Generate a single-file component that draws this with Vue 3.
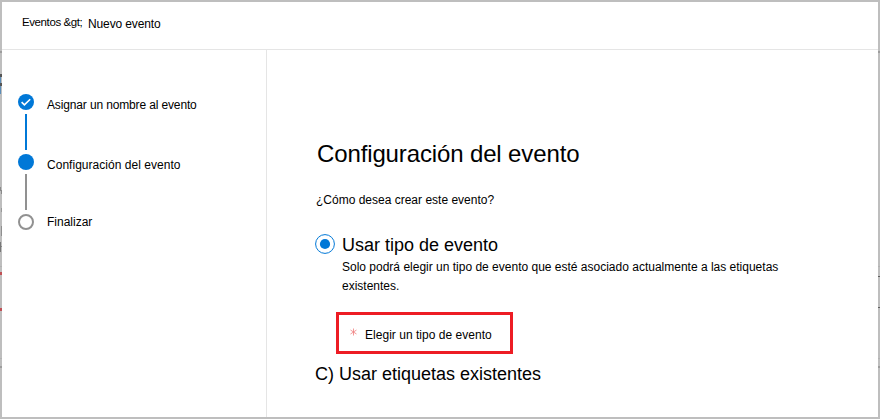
<script setup>
const steps = [
  { label: 'Asignar un nombre al evento', state: 'done' },
  { label: 'Configuración del evento', state: 'current' },
  { label: 'Finalizar', state: 'pending' },
]

// Slivers of the dimmed page that show around the panel
const slivers = [
  { x: 0, y: 51, w: 2, h: 2, c: '#9d9d9d' },
  { x: 0, y: 77, w: 1, h: 17, c: '#5b8db8' },
  { x: 0, y: 74, w: 2, h: 3, c: '#555555' },
  { x: 0, y: 83, w: 2, h: 3, c: '#555555' },
  { x: 0, y: 187, w: 1, h: 4, c: '#8a8a8a' },
  { x: 1, y: 190, w: 1, h: 4, c: '#8a8a8a' },
  { x: 1, y: 208, w: 1, h: 4, c: '#999999' },
  { x: 1, y: 226, w: 1, h: 10, c: '#8f8f8f' },
  { x: 0, y: 242, w: 1, h: 10, c: '#777777' },
  { x: 1, y: 246, w: 1, h: 1, c: '#888888' },
  { x: 0, y: 266, w: 2, h: 1, c: '#b2b2b2' },
  { x: 0, y: 272, w: 2, h: 3, c: '#c05055' },
  { x: 0, y: 308, w: 2, h: 3, c: '#c05055' },
  { x: 0, y: 358, w: 2, h: 1, c: '#b2b2b2' },
  { x: 0, y: 366, w: 2, h: 2, c: '#9d9d9d' },
  { x: 878, y: 51, w: 2, h: 2, c: '#9d9d9d' },
  { x: 878, y: 266, w: 2, h: 1, c: '#b2b2b2' },
  { x: 878, y: 276, w: 2, h: 1, c: '#606060' },
  { x: 878, y: 307, w: 2, h: 1, c: '#606060' },
  { x: 878, y: 358, w: 2, h: 1, c: '#b2b2b2' },
  { x: 878, y: 366, w: 2, h: 2, c: '#9d9d9d' },
]
</script>

<template>
  <div class="backdrop">
    <i
      v-for="(s, i) in slivers"
      :key="i"
      class="sliver"
      :style="{ left: s.x + 'px', top: s.y + 'px', width: s.w + 'px', height: s.h + 'px', background: s.c }"
    ></i>
    <div class="panel">
      <header class="crumbs">
        <span class="crumb-root">Eventos &amp;gt;</span>
        <span class="crumb-leaf">Nuevo evento</span>
      </header>
      <div class="body">
        <nav class="steps">
          <div v-for="s in steps" :key="s.label" class="step" :class="s.state">
            <div class="rail">
              <svg class="dot" viewBox="0 0 16 16">
                <circle v-if="s.state === 'pending'" cx="8" cy="8" r="7" fill="#fff" stroke="#919191" stroke-width="2" />
                <circle v-else cx="8" cy="8" r="8" fill="#0078d7" />
                <path v-if="s.state === 'done'" d="M3.6 8.2 L6.4 10.9 L12.2 5.2" fill="none" stroke="#fff" stroke-width="1.6" />
              </svg>
              <div v-if="s.state !== 'pending'" class="line"></div>
            </div>
            <span class="label">{{ s.label }}</span>
          </div>
        </nav>
        <main class="content">
          <h1 class="title">Configuración del evento</h1>
          <p class="question">¿Cómo desea crear este evento?</p>
          <div class="option">
            <svg class="radio" viewBox="0 0 20 20">
              <circle cx="10" cy="10" r="9.4" fill="#fff" stroke="#0078d7" stroke-width="1" />
              <circle cx="10" cy="10" r="5.1" fill="#0078d7" />
            </svg>
            <div>
              <div class="option-title">Usar tipo de evento</div>
              <p class="hint">Solo podrá elegir un tipo de evento que esté asociado actualmente a las etiquetas<br />existentes.</p>
            </div>
          </div>
          <div class="choose">
            <svg class="required" viewBox="0 0 7 8">
              <path d="M3.5 0.5 V7.5 M0.5 2 L6.5 6 M6.5 2 L0.5 6" fill="none" stroke="#f08080" stroke-width="0.8" />
            </svg>
            <span class="choose-text">Elegir un tipo de evento</span>
          </div>
          <div class="existing">C) Usar etiquetas existentes</div>
        </main>
      </div>
    </div>
  </div>
</template>

<style>
body {
  margin: 0;
}
</style>

<style scoped>
.backdrop {
  position: relative;
  box-sizing: border-box;
  width: 880px;
  height: 419px;
  padding: 2px;
  background: #bebebe;
  color: #000;
  font-family: "Liberation Sans", Arial, sans-serif;
  font-size: 12px;
  line-height: 16px;
  white-space: nowrap;
}
.sliver {
  position: absolute;
}
.panel {
  display: flex;
  flex-direction: column;
  width: 876px;
  height: 415px;
  background: #fff;
}
.crumbs {
  display: flex;
  box-sizing: border-box;
  height: 48px;
  padding: 12px 0 0 20px;
  border-bottom: 1px solid #e5e5e5;
}
.crumb-root {
  width: 66px;
  font-size: 11.5px;
  letter-spacing: -0.4px;
}
.crumb-leaf {
  padding-top: 2px;
  letter-spacing: -0.12px;
}
.body {
  display: flex;
  flex: 1;
}
.steps {
  box-sizing: border-box;
  width: 265px;
  padding: 44px 0 0 16px;
  border-right: 1px solid #e5e5e5;
}
.step {
  display: flex;
  gap: 13px;
  height: 60px;
}
.rail {
  display: flex;
  flex-direction: column;
  align-items: center;
  gap: 4px;
  width: 16px;
}
.dot {
  width: 16px;
  height: 16px;
}
.line {
  width: 2px;
  height: 36px;
  background: #919191;
}
.done .line {
  background: #0078d7;
}
.label {
  padding-top: 3px;
}
.done .label {
  letter-spacing: -0.14px;
}
.current .label {
  letter-spacing: 0.03px;
}
.pending .label {
  padding-top: 0;
}
.content {
  padding: 89px 0 0 48px;
}
.title {
  margin: 0 0 0 2px;
  font-size: 24px;
  font-weight: 400;
  line-height: 30px;
  letter-spacing: -0.13px;
}
.question {
  margin: 23px 0 0 1px;
}
.option {
  display: flex;
  gap: 7px;
  margin-top: 26px;
}
.radio {
  width: 20px;
  height: 20px;
}
.option-title {
  font-size: 18px;
  line-height: 22px;
}
.hint {
  margin: 2px 0 0;
  line-height: 19px;
}
.choose {
  display: flex;
  align-items: flex-start;
  box-sizing: border-box;
  width: 177px;
  height: 42px;
  margin: 16px 0 0 21px;
  padding: 12px 0 0 11px;
  border: 3px solid #ed1c24;
}
.required {
  width: 7px;
  height: 8px;
  margin-top: 1px;
}
.choose-text {
  margin-left: 8px;
  letter-spacing: 0.03px;
}
.existing {
  margin-top: 9px;
  font-size: 18px;
  line-height: 22px;
}
</style>
